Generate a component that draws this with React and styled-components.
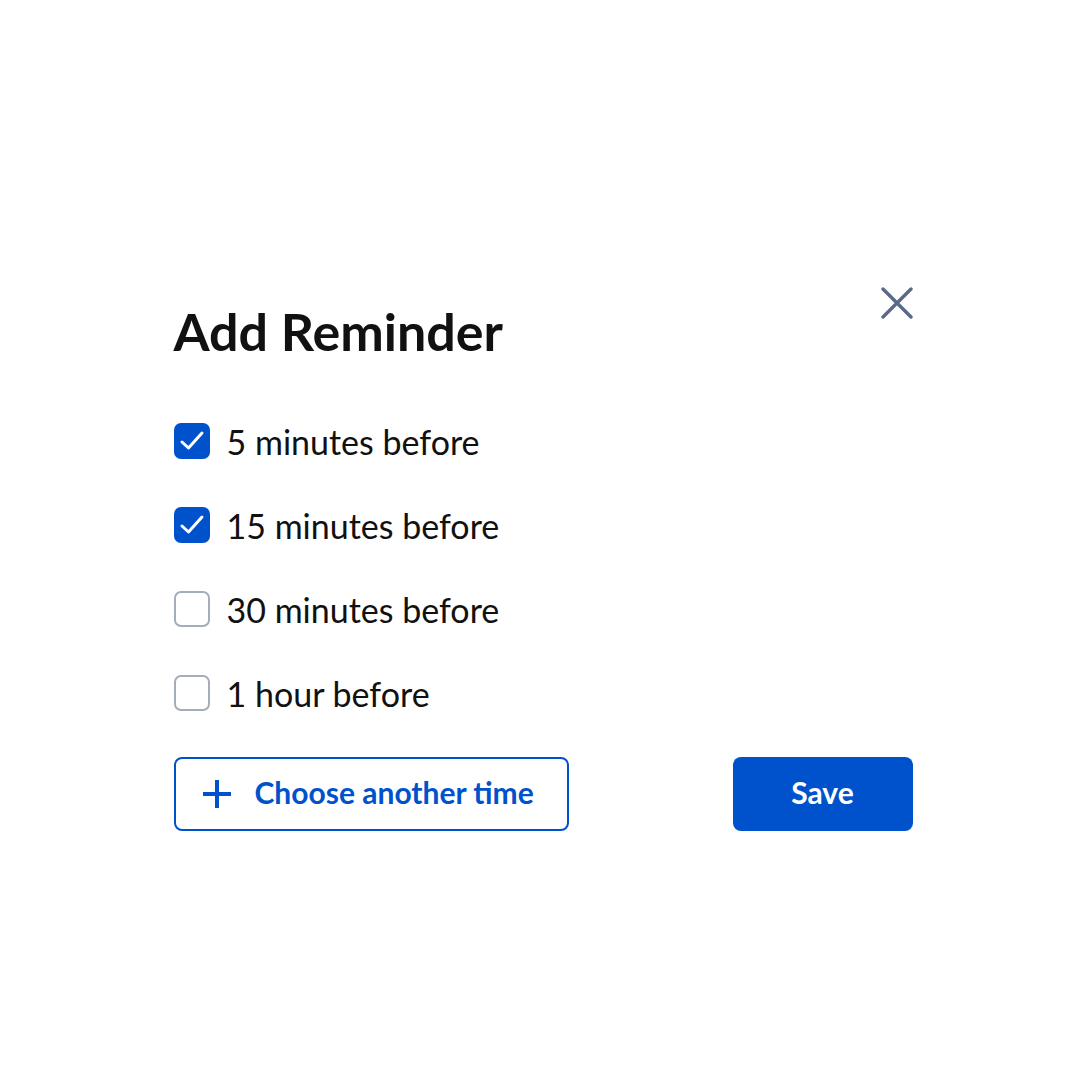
import React, { useState } from "react";
import styled, { createGlobalStyle } from "styled-components";

const GlobalStyle = createGlobalStyle`
  html, body {
    margin: 0;
    padding: 0;
    background: #ffffff;
  }
  body {
    font-family: Lato, "Open Sans", Arial, sans-serif;
    color: #111111;
  }
`;

const Page = styled.div`
  display: flex;
  width: 100%;
  min-height: 100vh;
  align-items: flex-start;
  justify-content: center;
  box-sizing: border-box;
  padding: 287px 0 0 6px;
`;

const Dialog = styled.div`
  width: 739px;
  display: flex;
  flex-direction: column;
`;

const Header = styled.div`
  display: flex;
  justify-content: space-between;
  align-items: flex-start;
`;

const Title = styled.h1`
  margin: 14px 0 0 0;
  font-size: 52px;
  line-height: 60px;
  font-weight: 700;
  color: #111111;
`;

const CloseButton = styled.button`
  width: 32px;
  height: 32px;
  padding: 0;
  border: none;
  background: none;
  cursor: pointer;
  display: flex;

  svg {
    display: block;
  }
`;

const Options = styled.div`
  display: flex;
  flex-direction: column;
  gap: 40px;
  margin-top: 58px;
`;

const Option = styled.label`
  display: flex;
  align-items: center;
  gap: 17px;
  height: 44px;
  font-size: 34px;
  color: #111111;
  cursor: pointer;
`;

const Box = styled.span`
  width: 36px;
  height: 36px;
  box-sizing: border-box;
  border-radius: 7px;
  display: flex;
  align-items: center;
  justify-content: center;
  flex-shrink: 0;
  background: ${(p) => (p.checked ? "#0052cc" : "#ffffff")};
  border: ${(p) => (p.checked ? "none" : "2px solid #a5adba")};

  svg {
    display: block;
  }
`;

const Actions = styled.div`
  display: flex;
  justify-content: space-between;
  align-items: center;
  margin-top: 42px;
`;

const OutlineButton = styled.button`
  display: flex;
  align-items: center;
  gap: 24px;
  width: 395px;
  height: 74px;
  box-sizing: border-box;
  padding: 0 0 0 27px;
  border: 2px solid #0052cc;
  border-radius: 8px;
  background: #ffffff;
  color: #0052cc;
  font-family: Lato, "Open Sans", Arial, sans-serif;
  font-size: 30px;
  font-weight: 700;
  cursor: pointer;

  span {
    padding-bottom: 5px;
  }

  svg {
    display: block;
    flex-shrink: 0;
  }
`;

const PrimaryButton = styled.button`
  width: 180px;
  height: 74px;
  box-sizing: border-box;
  padding: 0 0 5px;
  border: none;
  border-radius: 8px;
  background: #0052cc;
  color: #ffffff;
  font-family: Lato, "Open Sans", Arial, sans-serif;
  font-size: 30px;
  font-weight: 700;
  cursor: pointer;
`;

const CheckMark = () => (
  <svg width="36" height="36" viewBox="0 0 36 36" fill="none">
    <path
      d="M8 19 L14.5 25 L28 10"
      stroke="#ffffff"
      strokeWidth="3"
      strokeLinecap="round"
      strokeLinejoin="round"
    />
  </svg>
);

const options = [
  { id: 5, label: "5 minutes before", checked: true },
  { id: 15, label: "15 minutes before", checked: true },
  { id: 30, label: "30 minutes before", checked: false },
  { id: 60, label: "1 hour before", checked: false },
];

const App = () => {
  const [items, setItems] = useState(options);

  const toggle = (id) =>
    setItems((prev) =>
      prev.map((o) => (o.id === id ? { ...o, checked: !o.checked } : o))
    );

  return (
    <>
      <GlobalStyle />
      <Page>
        <Dialog>
          <Header>
            <Title>Add Reminder</Title>
            <CloseButton aria-label="Close">
              <svg width="32" height="32" viewBox="0 0 32 32" fill="none">
                <path
                  d="M2 2 L30 30 M30 2 L2 30"
                  stroke="#5a6987"
                  strokeWidth="3.4"
                  strokeLinecap="round"
                />
              </svg>
            </CloseButton>
          </Header>

          <Options>
            {items.map((o) => (
              <Option key={o.id} onClick={() => toggle(o.id)}>
                <Box checked={o.checked}>{o.checked && <CheckMark />}</Box>
                {o.label}
              </Option>
            ))}
          </Options>

          <Actions>
            <OutlineButton>
              <svg width="28" height="28" viewBox="0 0 28 28" fill="none">
                <path
                  d="M14 0 V28 M0 14 H28"
                  stroke="#0052cc"
                  strokeWidth="4"
                />
              </svg>
              <span>Choose another time</span>
            </OutlineButton>
            <PrimaryButton>Save</PrimaryButton>
          </Actions>
        </Dialog>
      </Page>
    </>
  );
};

export default App;
